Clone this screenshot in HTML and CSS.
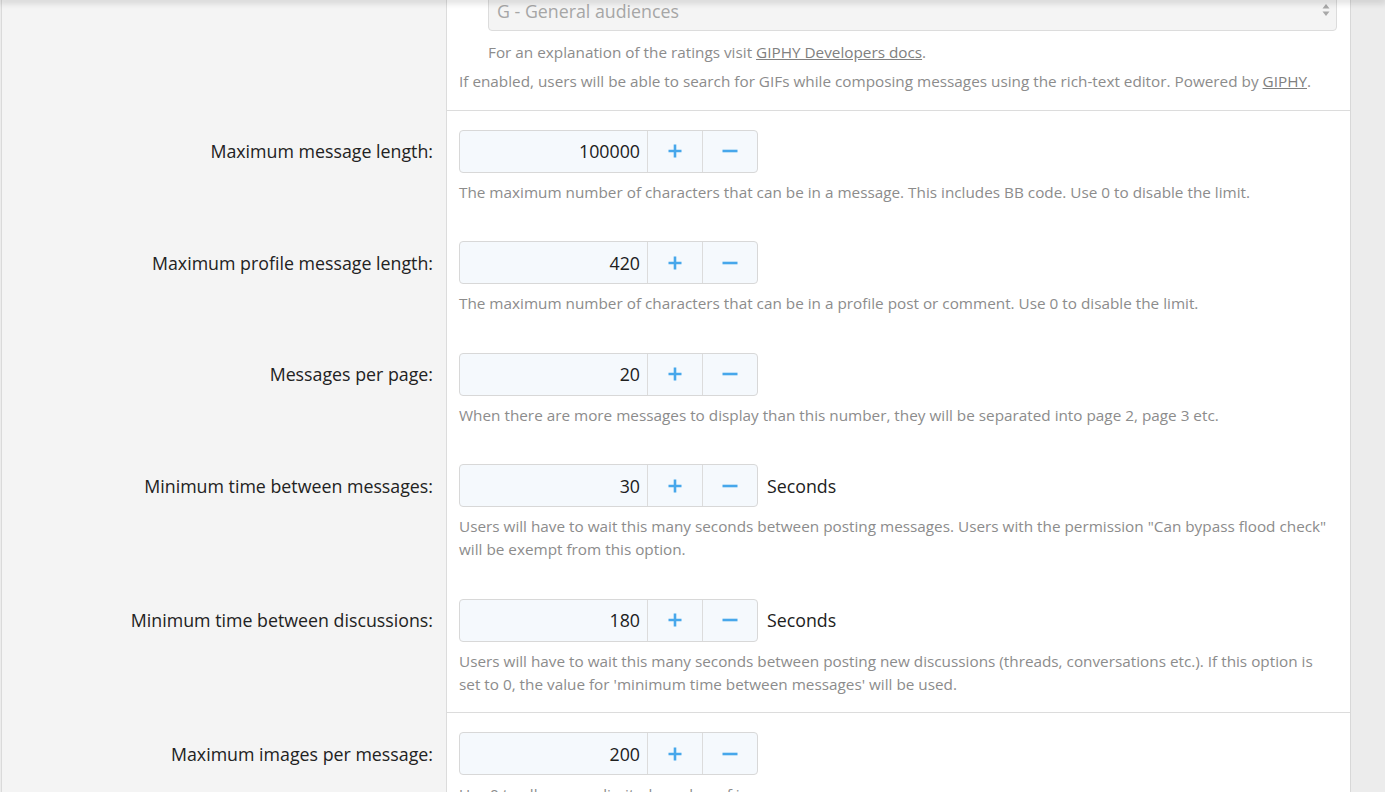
FILE: index.html
```html
<!DOCTYPE html>
<html lang="en">
<head>
<meta charset="UTF-8">
<meta name="viewport" content="width=device-width, initial-scale=1.0">
<title>Options: Messages</title>
<link rel="stylesheet" href="styles.css">
</head>
<body>

<div class="topShadow"></div>

<div class="block">

  <!-- GIF search (tail end of the previous option) -->
  <dl class="formRow formRow--sep formRow--first">
    <dt></dt>
    <dd>
      <div class="subOptions">
        <div class="select">
          <span>G - General audiences</span>
          <svg class="selectArrow" width="8" height="14" viewBox="0 0 8 14"><path d="M4 1 L7.5 5.5 H0.5 Z M4 13 L7.5 8.5 H0.5 Z" fill="#a8a8a8"/></svg>
        </div>
        <div class="explain">For an explanation of the ratings visit <a href="#">GIPHY Developers docs</a>.</div>
      </div>
      <div class="explain explain--after">If enabled, users will be able to search for GIFs while composing messages using the rich-text editor. Powered by <a href="#">GIPHY</a>.</div>
    </dd>
  </dl>

  <dl class="formRow">
    <dt><label>Maximum message length:</label></dt>
    <dd>
      <div class="inputLine">
        <div class="spinBox">
          <input class="spinInput" type="text" value="100000">
          <button class="spinBtn"><svg width="16" height="16" viewBox="0 0 16 16"><path d="M8 1.5 V14.5 M1.5 8 H14.5" stroke="#47a7eb" stroke-width="2.6"/></svg></button>
          <button class="spinBtn"><svg width="16" height="16" viewBox="0 0 16 16"><path d="M0.5 8 H15.5" stroke="#47a7eb" stroke-width="2.6"/></svg></button>
        </div>
      </div>
      <div class="explain">The maximum number of characters that can be in a message. This includes BB code. Use 0 to disable the limit.</div>
    </dd>
  </dl>

  <dl class="formRow">
    <dt><label>Maximum profile message length:</label></dt>
    <dd>
      <div class="inputLine">
        <div class="spinBox">
          <input class="spinInput" type="text" value="420">
          <button class="spinBtn"><svg width="16" height="16" viewBox="0 0 16 16"><path d="M8 1.5 V14.5 M1.5 8 H14.5" stroke="#47a7eb" stroke-width="2.6"/></svg></button>
          <button class="spinBtn"><svg width="16" height="16" viewBox="0 0 16 16"><path d="M0.5 8 H15.5" stroke="#47a7eb" stroke-width="2.6"/></svg></button>
        </div>
      </div>
      <div class="explain">The maximum number of characters that can be in a profile post or comment. Use 0 to disable the limit.</div>
    </dd>
  </dl>

  <dl class="formRow">
    <dt><label>Messages per page:</label></dt>
    <dd>
      <div class="inputLine">
        <div class="spinBox">
          <input class="spinInput" type="text" value="20">
          <button class="spinBtn"><svg width="16" height="16" viewBox="0 0 16 16"><path d="M8 1.5 V14.5 M1.5 8 H14.5" stroke="#47a7eb" stroke-width="2.6"/></svg></button>
          <button class="spinBtn"><svg width="16" height="16" viewBox="0 0 16 16"><path d="M0.5 8 H15.5" stroke="#47a7eb" stroke-width="2.6"/></svg></button>
        </div>
      </div>
      <div class="explain">When there are more messages to display than this number, they will be separated into page 2, page 3 etc.</div>
    </dd>
  </dl>

  <dl class="formRow">
    <dt><label>Minimum time between messages:</label></dt>
    <dd>
      <div class="inputLine">
        <div class="spinBox">
          <input class="spinInput" type="text" value="30">
          <button class="spinBtn"><svg width="16" height="16" viewBox="0 0 16 16"><path d="M8 1.5 V14.5 M1.5 8 H14.5" stroke="#47a7eb" stroke-width="2.6"/></svg></button>
          <button class="spinBtn"><svg width="16" height="16" viewBox="0 0 16 16"><path d="M0.5 8 H15.5" stroke="#47a7eb" stroke-width="2.6"/></svg></button>
        </div>
        <span class="units">Seconds</span>
      </div>
      <div class="explain">Users will have to wait this many seconds between posting messages. Users with the permission "Can bypass flood check" will be exempt from this option.</div>
    </dd>
  </dl>

  <dl class="formRow formRow--sep">
    <dt><label>Minimum time between discussions:</label></dt>
    <dd>
      <div class="inputLine">
        <div class="spinBox">
          <input class="spinInput" type="text" value="180">
          <button class="spinBtn"><svg width="16" height="16" viewBox="0 0 16 16"><path d="M8 1.5 V14.5 M1.5 8 H14.5" stroke="#47a7eb" stroke-width="2.6"/></svg></button>
          <button class="spinBtn"><svg width="16" height="16" viewBox="0 0 16 16"><path d="M0.5 8 H15.5" stroke="#47a7eb" stroke-width="2.6"/></svg></button>
        </div>
        <span class="units">Seconds</span>
      </div>
      <div class="explain">Users will have to wait this many seconds between posting new discussions (threads, conversations etc.). If this option is set to 0, the value for 'minimum time between messages' will be used.</div>
    </dd>
  </dl>

  <dl class="formRow">
    <dt><label>Maximum images per message:</label></dt>
    <dd>
      <div class="inputLine">
        <div class="spinBox">
          <input class="spinInput" type="text" value="200">
          <button class="spinBtn"><svg width="16" height="16" viewBox="0 0 16 16"><path d="M8 1.5 V14.5 M1.5 8 H14.5" stroke="#47a7eb" stroke-width="2.6"/></svg></button>
          <button class="spinBtn"><svg width="16" height="16" viewBox="0 0 16 16"><path d="M0.5 8 H15.5" stroke="#47a7eb" stroke-width="2.6"/></svg></button>
        </div>
      </div>
      <div class="explain">Use 0 to allow an unlimited number of images per message.</div>
    </dd>
  </dl>

</div>

</body>
</html>
```

FILE: styles.css
```css
html, body {
    margin: 0;
    padding: 0;
}
body {
    background-color: #ececec;
    font-family: "Open Sans", "Noto Sans", sans-serif;
    color: #202020;
    overflow: hidden;
    height: 792px;
}

.topShadow {
    position: fixed;
    top: 0;
    left: 0;
    right: 0;
    height: 0;
    box-shadow: 0 0 7px 2px rgba(0, 0, 0, 0.22);
    z-index: 10;
}

.block {
    width: 1348px;
    margin-left: 1px;
    background-color: #ffffff;
    border-left: 1px solid #dadada;
    border-right: 1px solid #d8d8d8;
}

.formRow {
    display: grid;
    grid-template-columns: 445px 1fr;
    margin: 0;
}
.formRow dt {
    background-color: #f4f4f4;
    border-right: 1px solid #dcdcdc;
    padding: 19.5px 13px 0 0;
    text-align: right;
    margin: 0;
}
.formRow dt label {
    display: block;
    line-height: 43px;
    font-size: 17.8px;
    color: #222222;
}
.formRow dd {
    margin: 0;
    padding: 19px 13px 18.5px 12px;
    min-width: 0;
}

.formRow--sep dd {
    padding-bottom: 16.5px;
    border-bottom: 1px solid #dcdcdc;
}
.formRow--first dd {
    padding-top: 0;
    padding-bottom: 16.5px;
}
.formRow--first {
    margin-top: -12px;
}

.subOptions {
    margin-left: 29px;
}

.select {
    border: 1px solid #dcdcdc;
    border-radius: 4px;
    background-color: #f4f4f4;
    color: #a6a6a6;
    font-size: 17.8px;
    display: flex;
    align-items: center;
    justify-content: space-between;
    padding: 3px 6px 0 8px;
    box-sizing: border-box;
    height: 43px;
    margin-bottom: 10px;
}
.selectArrow {
    margin-top: -3px;
}

.explain {
    font-size: 15.3px;
    line-height: 23px;
    color: #8c8c8c;
    margin-top: 8px;
}
.subOptions .explain {
    margin-top: 0;
}
.explain--after {
    margin-top: 6px;
}
.explain a {
    color: #808080;
    text-decoration: underline;
}

.inputLine {
    display: flex;
    align-items: center;
}

.spinBox {
    display: flex;
    width: 297px;
    height: 41px;
    border: 1px solid #d8d8d8;
    border-radius: 4px;
    background-color: #f5f9fd;
}
.spinInput {
    width: 187px;
    border: none;
    background: transparent;
    text-align: right;
    font-family: "Open Sans", "Noto Sans", sans-serif;
    font-size: 17.8px;
    color: #202020;
    padding: 0 7px 0 0;
    margin: 0;
    box-sizing: border-box;
    outline: none;
}
.spinBtn {
    width: 55px;
    border: none;
    border-left: 1px solid #dcdcdc;
    background: transparent;
    padding: 0;
    margin: 0;
    display: flex;
    align-items: center;
    justify-content: center;
    cursor: pointer;
}

.units {
    font-size: 17.8px;
    margin-left: 9px;
    color: #202020;
}
```
